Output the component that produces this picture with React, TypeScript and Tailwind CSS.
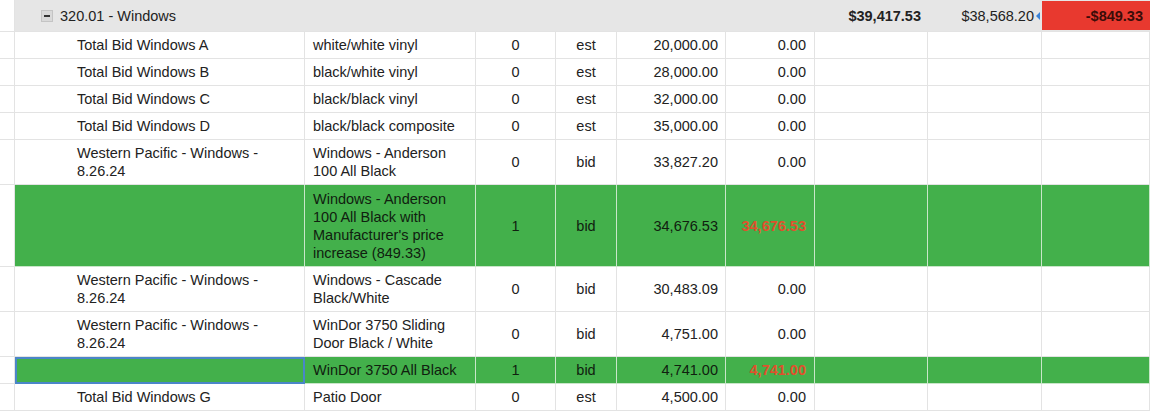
import React from 'react'

const cols =
  'grid grid-cols-[15px_290px_171px_80px_61px_109px_89px_113px_114px_108px]'

type Item = {
  name?: string
  desc: string
  qty: string
  unit: string
  amount: string
  total: string
  h: string
  picked?: boolean
  selected?: boolean
}

const items: Item[] = [
  { name: 'Total Bid Windows A', desc: 'white/white vinyl', qty: '0', unit: 'est', amount: '20,000.00', total: '0.00', h: 'h-[27px]' },
  { name: 'Total Bid Windows B', desc: 'black/white vinyl', qty: '0', unit: 'est', amount: '28,000.00', total: '0.00', h: 'h-[27px]' },
  { name: 'Total Bid Windows C', desc: 'black/black vinyl', qty: '0', unit: 'est', amount: '32,000.00', total: '0.00', h: 'h-[27px]' },
  { name: 'Total Bid Windows D', desc: 'black/black composite', qty: '0', unit: 'est', amount: '35,000.00', total: '0.00', h: 'h-[27px]' },
  { name: 'Western Pacific - Windows - 8.26.24', desc: 'Windows - Anderson 100 All Black', qty: '0', unit: 'bid', amount: '33,827.20', total: '0.00', h: 'h-[45px]' },
  { desc: "Windows - Anderson 100 All Black with Manufacturer's price increase (849.33)", qty: '1', unit: 'bid', amount: '34,676.53', total: '34,676.53', h: 'h-[82px]', picked: true },
  { name: 'Western Pacific - Windows - 8.26.24', desc: 'Windows - Cascade Black/White', qty: '0', unit: 'bid', amount: '30,483.09', total: '0.00', h: 'h-[45px]' },
  { name: 'Western Pacific - Windows - 8.26.24', desc: 'WinDor 3750 Sliding Door Black / White', qty: '0', unit: 'bid', amount: '4,751.00', total: '0.00', h: 'h-[45px]' },
  { desc: 'WinDor 3750 All Black', qty: '1', unit: 'bid', amount: '4,741.00', total: '4,741.00', h: 'h-[27px]', picked: true, selected: true },
  { name: 'Total Bid Windows G', desc: 'Patio Door', qty: '0', unit: 'est', amount: '4,500.00', total: '0.00', h: 'h-[27px]' },
]

const Row = ({ it }: { it: Item }) => {
  const bg = it.picked ? 'bg-[#43b04b] text-[#10200f] border-[#c9e6c9]' : 'bg-white text-[#222] border-[#e3e3e3]'
  const cell = `flex items-center border-r border-b ${bg}`
  return (
    <div className={`${cols} ${it.h}`}>
      <div className="border-r border-b border-[#e3e3e3] bg-white" />
      <div
        className={`${cell} pl-[62px] pr-4 ${it.selected ? 'outline-2 -outline-offset-2 outline-[#4a86c8]' : ''}`}
      >
        {it.name}
      </div>
      <div className={`${cell} pl-2 pr-1`}>{it.desc}</div>
      <div className={`${cell} justify-center`}>{it.qty}</div>
      <div className={`${cell} justify-center`}>{it.unit}</div>
      <div className={`${cell} justify-end pr-[7px]`}>{it.amount}</div>
      <div
        className={`${cell} justify-end pr-2 ${it.picked ? 'font-bold text-[#e0502d]' : ''}`}
      >
        {it.total}
      </div>
      <div className={cell} />
      <div className={cell} />
      <div className={cell} />
    </div>
  )
}

export default function App() {
  return (
    <div className="w-[1152px] h-[415px] overflow-hidden bg-white font-['Liberation_Sans',Arial,sans-serif] text-[14.5px] leading-[18px] text-[#222]">
      <div className={`${cols} h-[32px]`}>
        <div className="border-r border-b border-[#e3e3e3] bg-white" />
        <div className="col-span-6 flex items-center gap-[7px] pl-[26px] bg-[#e6e6e6] border-b border-[#e3e3e3]">
          <span className="flex items-center justify-center w-[12px] h-[12px] bg-[#d9d9d9] border border-[#c4c4c4]">
            <span className="block w-[6px] h-[2px] bg-[#333]" />
          </span>
          <span>320.01 - Windows</span>
        </div>
        <div className="flex items-center justify-end pr-[7px] bg-[#e6e6e6] border-b border-[#e3e3e3] font-bold">
          $39,417.53
        </div>
        <div className="flex items-center justify-end pr-[2px] bg-[#e6e6e6] border-b border-[#e3e3e3]">
          <span>$38,568.20</span>
          <span className="ml-[2px] w-0 h-0 border-y-[4px] border-y-transparent border-r-[4px] border-r-[#3b82d6]" />
        </div>
        <div className="flex items-stretch bg-[#e6e6e6] border-b border-[#e3e3e3] pt-px pb-px">
          <div className="flex-1 flex items-center justify-end pr-[7px] bg-[#e8392f] font-bold text-[#3a0c08]">
            -$849.33
          </div>
        </div>
      </div>
      {items.map((it, i) => (
        <Row key={i} it={it} />
      ))}
    </div>
  )
}
